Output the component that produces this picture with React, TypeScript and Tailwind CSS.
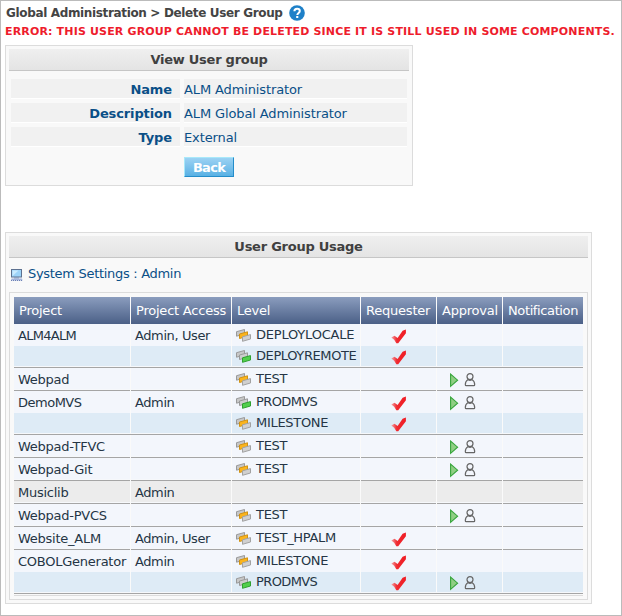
import React from "react";

type Level = { name: string; kind: "orange" | "green"; requester?: boolean; approval?: boolean; tracking?: string };
type Project = { name: string; access: string; levels: Level[]; tracking?: string };

const projects: Project[] = [
  {
    name: "ALM4ALM",
    access: "Admin, User",
    tracking: "tracking-[-0.7px]",
    levels: [
      { name: "DEPLOYLOCALE", kind: "orange", requester: true, tracking: "tracking-[-0.2px]" },
      { name: "DEPLOYREMOTE", kind: "green", requester: true, tracking: "tracking-[-0.4px]" },
    ],
  },
  { name: "Webpad", access: "", levels: [{ name: "TEST", kind: "orange", approval: true }] },
  {
    name: "DemoMVS",
    access: "Admin",
    tracking: "tracking-[-0.5px]",
    levels: [
      { name: "PRODMVS", kind: "green", requester: true, approval: true, tracking: "tracking-[-0.6px]" },
      { name: "MILESTONE", kind: "orange", requester: true },
    ],
  },
  { name: "Webpad-TFVC", access: "", levels: [{ name: "TEST", kind: "orange", approval: true }] },
  { name: "Webpad-Git", access: "", levels: [{ name: "TEST", kind: "orange", approval: true }] },
  { name: "Musiclib", access: "Admin", levels: [] },
  { name: "Webpad-PVCS", access: "", levels: [{ name: "TEST", kind: "orange", approval: true }] },
  { name: "Website_ALM", access: "Admin, User", levels: [{ name: "TEST_HPALM", kind: "orange", requester: true }] },
  {
    name: "COBOLGenerator",
    access: "Admin",
    levels: [
      { name: "MILESTONE", kind: "orange", requester: true },
      { name: "PRODMVS", kind: "green", requester: true, approval: true, tracking: "tracking-[-0.6px]" },
    ],
  },
];

function HelpIcon() {
  return (
    <svg width="16" height="16" viewBox="0 0 16 16">
      <circle cx="8" cy="8" r="7.8" fill="#1e80c8" />
      <path d="M5.4 6.2C5.4 4.6 6.4 3.7 8.1 3.7s2.7.9 2.7 2.3c0 1.9-2.5 2-2.5 4" fill="none" stroke="#fff" strokeWidth="2" />
      <rect x="7.2" y="11" width="2.1" height="2" fill="#fff" />
    </svg>
  );
}

function ComputerIcon() {
  return (
    <svg width="12" height="12" viewBox="0 0 12 12">
      <rect x="0.5" y="0.5" width="10" height="7.5" fill="#9dd3f8" stroke="#5d7190" />
      <path d="M1.500 7V1.500h6z" fill="#c9eafe" />
      <path d="M3 9h5" stroke="#7188b5" />
      <path d="M0.5 9.5h10.5l.5 2H0z" fill="#a5b5dc" />
      <path d="M0 11.5h12" stroke="#6d81b5" strokeDasharray="1 1" />
    </svg>
  );
}

function LevelIcon({ kind }: { kind: "orange" | "green" }) {
  const orange = kind === "orange";
  return (
    <svg width="16" height="13" viewBox="0 0 16 13" className="shrink-0">
      <path d="M.5 2.700 8.500.5v4.500L.5 7.200z" fill="#c8c8c8" stroke="#999" />
      <path
        d="M3.500 5 11.500 2.800v4.400L3.500 9.500z"
        fill={orange ? "#fbb41c" : "#cdcdcd"}
        stroke={orange ? "#cf9214" : "#999"}
      />
      <path
        d="M6.500 7.800 14.500 5.600v4.400L6.500 12.300z"
        fill={orange ? "#d0d0d0" : "#52cf4c"}
        stroke={orange ? "#a2a2a2" : "#2fa02f"}
      />
    </svg>
  );
}

function CheckIcon() {
  return (
    <svg width="16" height="15" viewBox="0 0 16 15">
      <defs>
        <linearGradient id="tick" x1="0" x2="1">
          <stop offset="0" stopColor="#f6a3a6" />
          <stop offset="0.38" stopColor="#ef2a30" />
          <stop offset="1" stopColor="#f01c24" />
        </linearGradient>
      </defs>
      <path d="M.3 8.400 3.500 6.800 6.600 8.900 11.600 1.800 14.900.4V4.200L7.200 14.300 5.300 14.300 3.200 10.800z" fill="url(#tick)" />
    </svg>
  );
}

function ApprovalIcons() {
  return (
    <svg width="28" height="15" viewBox="0 0 28 15">
      <path d="M.6 1.1v12.3L7.6 7.2z" fill="#8fce83" stroke="#36a53b" strokeWidth="1.1" />
      <circle cx="20" cy="3.600" r="3" fill="none" stroke="#666" strokeWidth="1.2" />
      <path
        d="M17.8 6.700c-1.900 1-2.500 2.800-2.500 5 0 .600.300.900.900.900h7.600c.600 0 .900-.300.900-.900 0-2.200-.600-4-2.500-5-.8.8-3.600.8-4.400 0z"
        fill="none"
        stroke="#666"
        strokeWidth="1.2"
        strokeLinejoin="round"
      />
    </svg>
  );
}

function PanelTitle({ children }: { children: React.ReactNode }) {
  return (
    <div className="h-[22px] shrink-0 border-b border-[#c6c6c6] bg-linear-to-b from-[#efefef] to-[#e4e4e4] text-center text-[13px] leading-[21px] font-bold tracking-[-0.25px] text-[#404040]">
      {children}
    </div>
  );
}

function Field({ label, value }: { label: string; value: string }) {
  return (
    <div className="flex h-5 gap-1 leading-[22px] tracking-[-0.12px]">
      <div className="w-[169px] border-b border-white bg-[#f1f1f1] pr-2 text-right font-bold">{label}</div>
      <div className="w-[223px] border-b border-white bg-[#f1f1f1]">{value}</div>
    </div>
  );
}

const columns = "grid grid-cols-[117px_101px_129px_76px_66px_80px]";
const cell = "border-r border-[#fafafa]";

function ProjectRows({ project }: { project: Project }) {
  const levels: (Level | null)[] = project.levels.length ? project.levels : [null];
  const double = levels.length > 1;
  return (
    <div className="border-b border-[#a5a5a5]">
      {levels.map((level, i) => {
        const bg = !level ? "bg-[#ececec]" : i === 1 ? "bg-[#deebf6]" : "bg-[#f3f6fc]";
        const height = double ? (i === 0 ? "h-[22px]" : "h-[21px] border-b border-[#f6f8fb]") : "h-[22px] border-b border-[#f6f8fb]";
        const iconTop = i === 1 ? "pt-1" : "pt-[5px]";
        return (
          <div key={i} className={`${columns} ${height} ${bg} leading-[23px]`}>
            <div className={`${cell} pl-1 ${project.tracking ?? "tracking-[-0.25px]"}`}>{i === 0 ? project.name : ""}</div>
            <div className={`${cell} pl-1 tracking-[-0.4px]`}>{i === 0 ? project.access : ""}</div>
            <div className={`${cell} flex items-start pl-1 ${i === 1 ? "leading-[19px]" : "leading-[21px]"}`}>
              {level && (
                <>
                  <span className={iconTop}><LevelIcon kind={level.kind} /></span>
                  <span className={`pl-1 ${level.tracking ?? "tracking-[-0.3px]"}`}>{level.name}</span>
                </>
              )}
            </div>
            <div className={`${cell} pl-[30px] ${iconTop}`}>{level?.requester && <CheckIcon />}</div>
            <div className={`${cell} pl-[13px] ${iconTop}`}>{level?.approval && <ApprovalIcons />}</div>
            <div />
          </div>
        );
      })}
    </div>
  );
}

export default function App() {
  return (
    <div className="h-[616px] w-[622px] overflow-hidden border border-[#bbb] bg-white pl-1 font-['DejaVu_Sans',Verdana,sans-serif] text-[13px] whitespace-nowrap text-[#0a4f87]">
      <div className="flex h-6 items-center gap-1.5 pl-px text-[12px] font-bold tracking-[-0.35px] text-[#444]">
        <span>Global Administration &gt; Delete User Group</span>
        <HelpIcon />
      </div>
      <div className="h-5 text-[11px] leading-[13px] font-bold tracking-[0.16px] text-[#ee1c2c]">
        ERROR: THIS USER GROUP CANNOT BE DELETED SINCE IT IS STILL USED IN SOME COMPONENTS.
      </div>

      <section className="h-[141px] w-[408px] border border-[#dcdcdc] bg-[#f9f9f9] p-[3px]">
        <PanelTitle>View User group</PanelTitle>
        <div className="flex flex-col gap-1 pt-2 pl-0.5">
          <Field label="Name" value="ALM Administrator" />
          <Field label="Description" value="ALM Global Administrator" />
          <Field label="Type" value="External" />
        </div>
        <button className="mt-2.5 ml-[175px] block h-5 w-[50px] border-t border-r border-b border-l border-t-[#a8e8fa] border-r-[#248dca] border-b-[#248dca] border-l-[#a8e8fa] bg-linear-to-b from-[#9bd2f3] to-[#58b1e4] text-center leading-[20px] font-bold tracking-[-0.7px] text-white">
          Back
        </button>
      </section>

      <section className="mt-[46px] h-[372px] w-[587px] border border-[#dcdcdc] bg-[#f9f9f9] p-[3px]">
        <PanelTitle>User Group Usage</PanelTitle>
        <div className="flex h-[34px] pl-0.5">
          <span className="pt-[11px]"><ComputerIcon /></span>
          <span className="pl-[5px] leading-[31px] tracking-[-0.3px]">System Settings : Admin</span>
        </div>
        <div className="h-[308px] w-[579px] border border-[#dcdcdc] p-1">
          <div className="text-[#253545]">
            <div className={`${columns} h-[27px] bg-linear-to-b from-[#8b9dbe] to-[#4b6087] leading-[27px] tracking-[-0.22px] text-white`}>
              <div className={`${cell} pl-[5px]`}>Project</div>
              <div className={`${cell} pl-[5px]`}>Project Access</div>
              <div className={`${cell} pl-[5px]`}>Level</div>
              <div className={`${cell} pl-[5px]`}>Requester</div>
              <div className={`${cell} pl-[5px]`}>Approval</div>
              <div className="pl-[5px] tracking-[-0.38px]">Notification</div>
            </div>
            {projects.map((p) => (
              <ProjectRows key={p.name} project={p} />
            ))}
          </div>
          <div className="mt-px h-px bg-[#dcdcdc]" />
        </div>
      </section>
    </div>
  );
}
